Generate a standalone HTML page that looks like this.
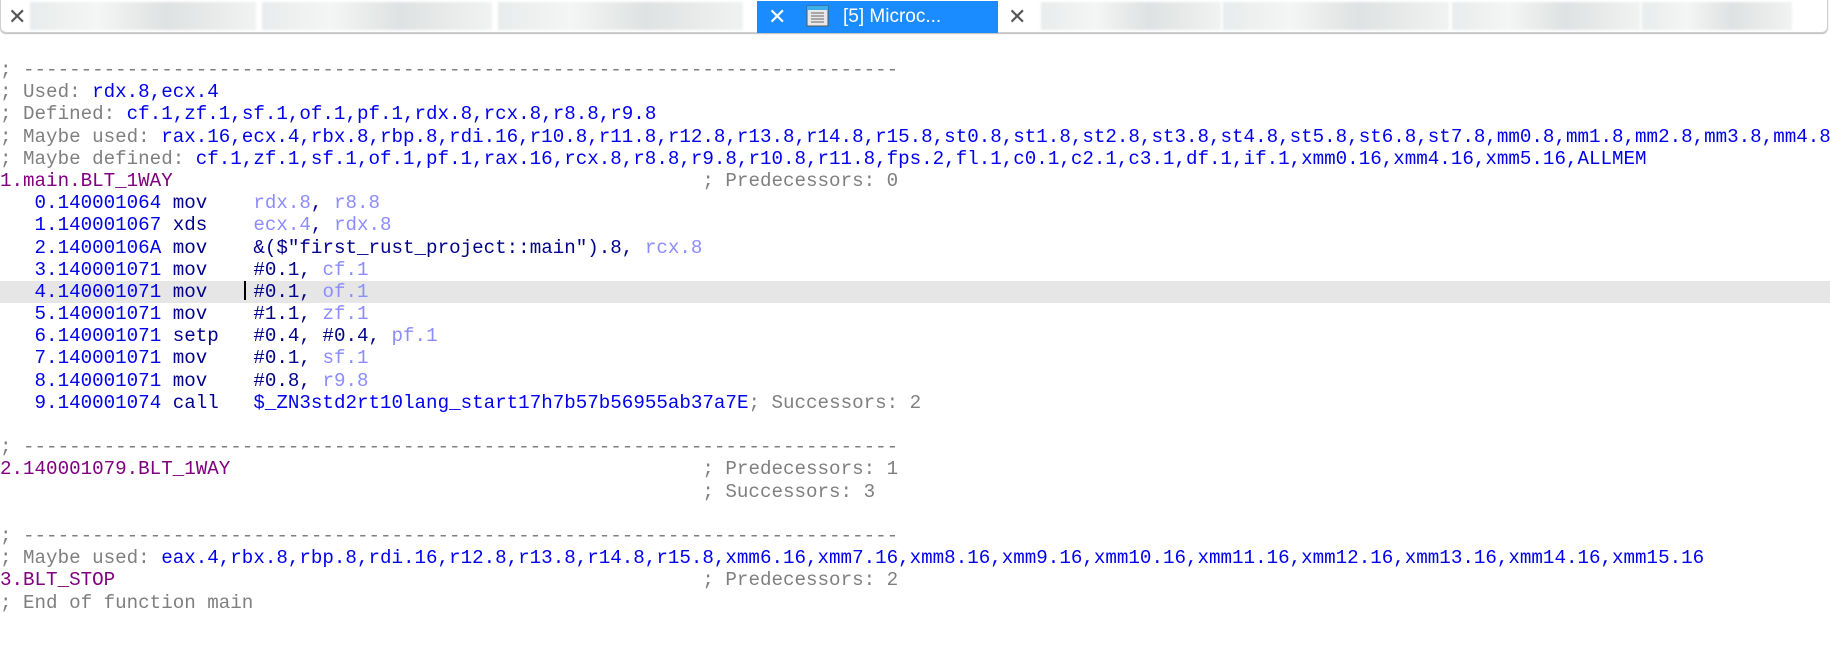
<!DOCTYPE html>
<html><head><meta charset="utf-8"><style>
html,body{margin:0;padding:0;background:#fff;width:1830px;height:666px;overflow:hidden;position:relative}
.bar{position:absolute;left:0;top:0;width:1826px;height:32px;border:1px solid #cfcfcf;border-top:none;border-radius:0 0 6px 6px;background:#fff;box-shadow:0 1px 1px #bbb}
.tb{position:absolute;top:2px;height:28px;background:linear-gradient(90deg,#e9ecec,#f4f5f5 30%,#dfe2e2 60%,#f1f2f2);filter:blur(1px)}
.x{position:absolute;top:4px;font:22px "Liberation Sans",sans-serif;color:#555}
.blue{position:absolute;left:757px;top:1px;width:241px;height:32px;background:#1a8cff}
.code{position:absolute;left:0;top:59px;font-family:"Liberation Mono","DejaVu Sans Mono",monospace;font-size:19.2px}
.l{height:22.2px;line-height:22.2px;white-space:pre}
.c{color:#7f7f7f}.b{color:#0000ee}.p{color:#800080}.o{color:#8c8cff}.m{color:#000080}.k{color:#00008b}
.hl{position:absolute;left:0;top:281px;width:1830px;height:22px;background:#e6e6e6}
.cur{display:inline-block;width:2px;height:19px;background:#000;vertical-align:-3px;margin-left:-9px;margin-right:7px}
</style></head><body>
<div class="bar"></div>
<div class="tb" style="left:30px;width:226px"></div>
<div class="tb" style="left:262px;width:230px"></div>
<div class="tb" style="left:498px;width:245px"></div>
<div class="tb" style="left:1041px;width:180px"></div>
<div class="tb" style="left:1223px;width:226px"></div>
<div class="tb" style="left:1452px;width:188px"></div>
<div class="tb" style="left:1642px;width:150px"></div>
<div class="x" style="left:8px">✕</div>
<div class="blue"></div>
<div class="x" style="left:768px;color:#fff">✕</div>
<svg style="position:absolute;left:806px;top:5px" width="24" height="22"><rect x="1" y="1" width="21" height="20" fill="#e8e8e8" stroke="#555"/><rect x="1" y="1" width="21" height="4" fill="#3ab0e8"/><g stroke="#666"><line x1="5" y1="8" x2="18" y2="8"/><line x1="5" y1="11" x2="18" y2="11"/><line x1="5" y1="14" x2="18" y2="14"/><line x1="5" y1="17" x2="18" y2="17"/></g></svg>
<div style="position:absolute;left:843px;top:6px;font:19px 'Liberation Sans',sans-serif;color:#fff">[5] Microc...</div>
<div class="x" style="left:1008px">✕</div>
<div class="hl"></div>
<div class="code">
<div class="l c">; ----------------------------------------------------------------------------</div>
<div class="l"><span class="c">; Used: </span><span class="b">rdx.8,ecx.4</span></div>
<div class="l"><span class="c">; Defined: </span><span class="b">cf.1,zf.1,sf.1,of.1,pf.1,rdx.8,rcx.8,r8.8,r9.8</span></div>
<div class="l"><span class="c">; Maybe used: </span><span class="b">rax.16,ecx.4,rbx.8,rbp.8,rdi.16,r10.8,r11.8,r12.8,r13.8,r14.8,r15.8,st0.8,st1.8,st2.8,st3.8,st4.8,st5.8,st6.8,st7.8,mm0.8,mm1.8,mm2.8,mm3.8,mm4.8</span></div>
<div class="l"><span class="c">; Maybe defined: </span><span class="b">cf.1,zf.1,sf.1,of.1,pf.1,rax.16,rcx.8,r8.8,r9.8,r10.8,r11.8,fps.2,fl.1,c0.1,c2.1,c3.1,df.1,if.1,xmm0.16,xmm4.16,xmm5.16,ALLMEM</span></div>
<div class="l"><span class="p">1.main.BLT_1WAY</span>                                              <span class="c">; Predecessors: 0</span></div>
<div class="l">   <span class="b">0.140001064</span> <span class="k">mov</span>    <span class="o">rdx.8</span><span class="k">, </span><span class="o">r8.8</span></div>
<div class="l">   <span class="b">1.140001067</span> <span class="k">xds</span>    <span class="o">ecx.4</span><span class="k">, </span><span class="o">rdx.8</span></div>
<div class="l">   <span class="b">2.14000106A</span> <span class="k">mov</span>    <span class="k">&amp;($"first_rust_project::main").8, </span><span class="o">rcx.8</span></div>
<div class="l">   <span class="b">3.140001071</span> <span class="k">mov</span>    <span class="k">#0.1, </span><span class="o">cf.1</span></div>
<div class="l">   <span class="b">4.140001071</span> <span class="k">mov</span>    <span class="cur"></span><span class="k">#0.1, </span><span class="o">of.1</span></div>
<div class="l">   <span class="b">5.140001071</span> <span class="k">mov</span>    <span class="k">#1.1, </span><span class="o">zf.1</span></div>
<div class="l">   <span class="b">6.140001071</span> <span class="k">setp</span>   <span class="k">#0.4, #0.4, </span><span class="o">pf.1</span></div>
<div class="l">   <span class="b">7.140001071</span> <span class="k">mov</span>    <span class="k">#0.1, </span><span class="o">sf.1</span></div>
<div class="l">   <span class="b">8.140001071</span> <span class="k">mov</span>    <span class="k">#0.8, </span><span class="o">r9.8</span></div>
<div class="l">   <span class="b">9.140001074</span> <span class="k">call</span>   <span class="b">$_ZN3std2rt10lang_start17h7b57b56955ab37a7E</span><span class="c">; Successors: 2</span></div>
<div class="l"> </div>
<div class="l c">; ----------------------------------------------------------------------------</div>
<div class="l"><span class="p">2.140001079.BLT_1WAY</span>                                         <span class="c">; Predecessors: 1</span></div>
<div class="l c">                                                             ; Successors: 3</div>
<div class="l"> </div>
<div class="l c">; ----------------------------------------------------------------------------</div>
<div class="l"><span class="c">; Maybe used: </span><span class="b">eax.4,rbx.8,rbp.8,rdi.16,r12.8,r13.8,r14.8,r15.8,xmm6.16,xmm7.16,xmm8.16,xmm9.16,xmm10.16,xmm11.16,xmm12.16,xmm13.16,xmm14.16,xmm15.16</span></div>
<div class="l"><span class="p">3.BLT_STOP</span>                                                   <span class="c">; Predecessors: 2</span></div>
<div class="l c">; End of function main</div>
</div>
</body></html>
